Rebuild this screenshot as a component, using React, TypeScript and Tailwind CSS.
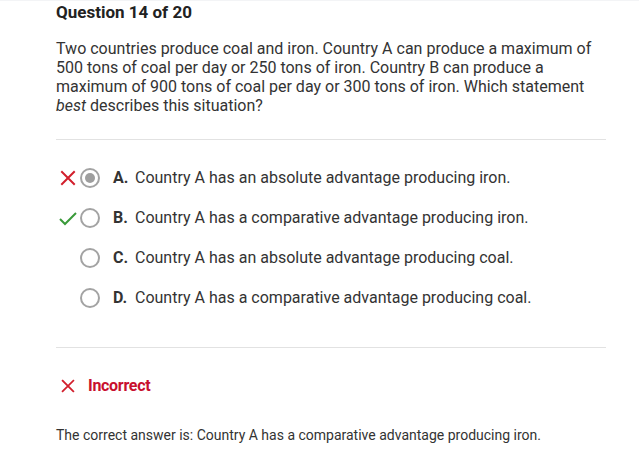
import React from "react";

const options = [
  { letter: "A", text: "Country A has an absolute advantage producing iron.", mark: "wrong", selected: true },
  { letter: "B", text: "Country A has a comparative advantage producing iron.", mark: "right", selected: false },
  { letter: "C", text: "Country A has an absolute advantage producing coal.", mark: "", selected: false },
  { letter: "D", text: "Country A has a comparative advantage producing coal.", mark: "", selected: false },
];

const Cross = ({ size = 18 }: { size?: number }) => (
  <svg width={size} height={size} viewBox="0 0 18 18">
    <path d="M3 3 L15 15 M15 3 L3 15" stroke="#d21f2c" strokeWidth="2" strokeLinecap="square" fill="none" />
  </svg>
);

const Check = () => (
  <svg width="20" height="18" viewBox="0 0 20 18">
    <path d="M2 10 L7 15 L18 4" stroke="#3a9a3a" strokeWidth="2" fill="none" />
  </svg>
);

export default function App() {
  return (
    <div className="w-[639px] h-[462px] bg-white border-t border-gray-100 overflow-hidden" style={{ fontFamily: "Roboto, 'Liberation Sans', sans-serif" }}>
      <div className="ml-[56px] w-[550px]">
        <h1 className="text-[17px] font-bold text-[#222] leading-[20px] pt-[1px]">Question 14 of 20</h1>
        <p className="mt-[17px] text-[16px] leading-[19px] text-[#333]">
          Two countries produce coal and iron. Country A can produce a maximum of 500 tons of coal per day or 250 tons of iron. Country B can produce a maximum of 900 tons of coal per day or 300 tons of iron. Which statement <i>best</i> describes this situation?
        </p>
        <div className="mt-[24px] border-t border-[#e2e2e2]" />
        <div className="pt-[28px] pb-[20px] flex flex-col gap-[20px]">
          {options.map((o) => (
            <div key={o.letter} className="flex items-center h-[20px]">
              <div className="w-[24px] flex justify-center">
                {o.mark === "wrong" && <Cross />}
                {o.mark === "right" && <Check />}
              </div>
              <div className="w-[20px] h-[20px] rounded-full border-2 border-[#a3a3a3] flex items-center justify-center">
                {o.selected && <div className="w-[10px] h-[10px] rounded-full bg-[#9e9e9e]" />}
              </div>
              <span className="ml-[13px] font-bold text-[16px] text-[#333] w-[22px]">{o.letter}.</span>
              <span className="text-[16px] text-[#333]">{o.text}</span>
            </div>
          ))}
        </div>
        <div className="mt-[19px] border-t border-[#e2e2e2]" />
        <div className="mt-[28px] flex items-center h-[20px]">
          <div className="w-[24px] flex justify-center">
            <Cross size={16} />
          </div>
          <span className="ml-[8px] text-[16px] font-bold text-[#c8102e] tracking-[-0.3px]">Incorrect</span>
        </div>
        <p className="mt-[30px] text-[14px] leading-[18px] text-[#333]">
          The correct answer is: Country A has a comparative advantage producing iron.
        </p>
      </div>
    </div>
  );
}
